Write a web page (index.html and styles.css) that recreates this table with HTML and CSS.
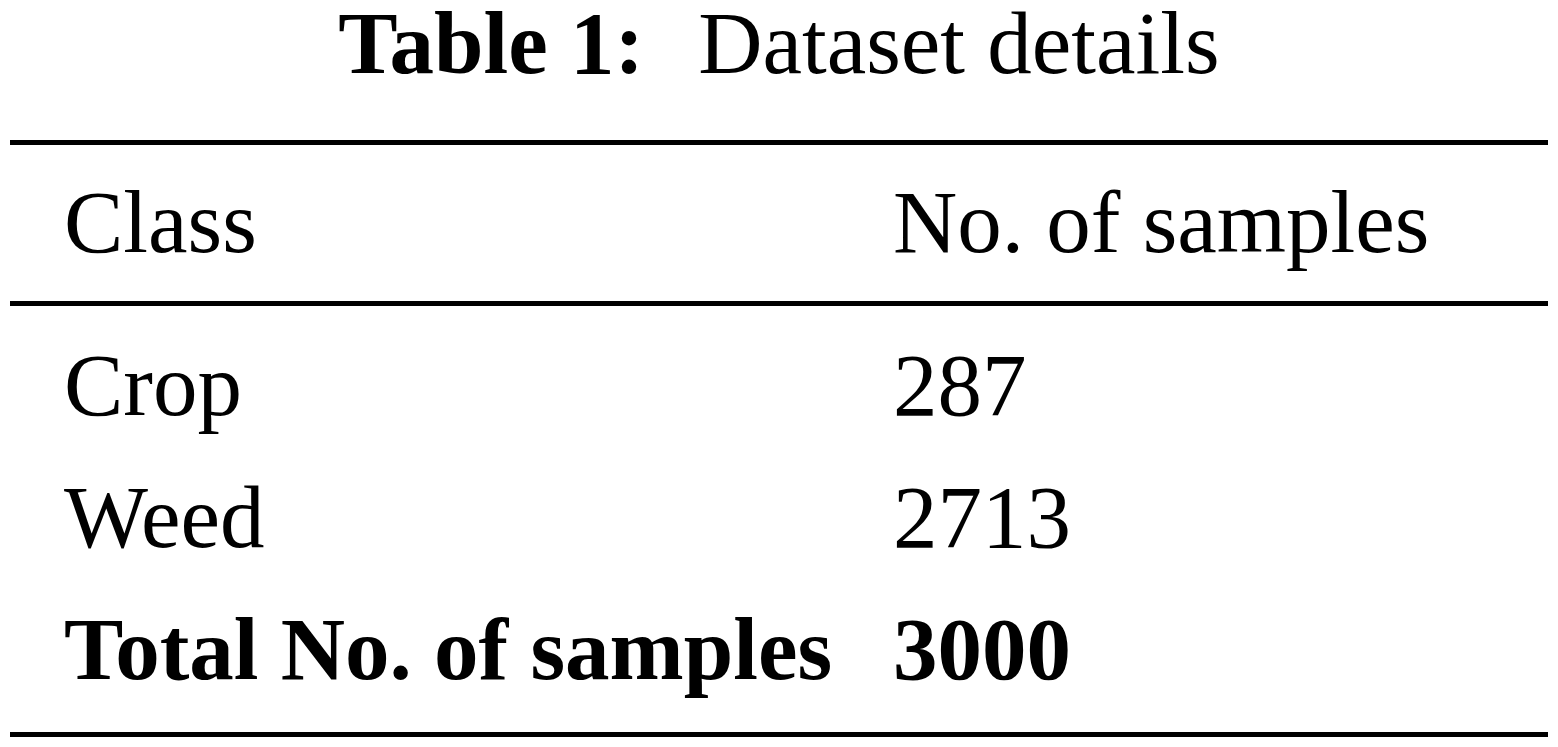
FILE: index.html
```html
<!DOCTYPE html>
<html lang="en">
<head>
    <meta charset="UTF-8">
    <title>Table 1: Dataset details</title>
    <link rel="stylesheet" href="styles.css">
</head>
<body>
    <div class="page">
        <div class="caption"><b>Table 1:</b><span class="caption-text">Dataset details</span></div>

        <table class="data">
            <colgroup>
                <col class="col-class">
                <col class="col-count">
            </colgroup>
            <thead>
                <tr>
                    <th>Class</th>
                    <th>No. of samples</th>
                </tr>
            </thead>
            <tbody>
                <tr class="first-row">
                    <td>Crop</td>
                    <td>287</td>
                </tr>
                <tr>
                    <td>Weed</td>
                    <td>2713</td>
                </tr>
                <tr class="total last-row">
                    <td>Total No. of samples</td>
                    <td>3000</td>
                </tr>
            </tbody>
        </table>
    </div>
</body>
</html>
```

FILE: styles.css
```css
body {
    margin: 0;
    background: #fff;
    color: #000;
    font-family: "Liberation Serif", "Times New Roman", serif;
    font-size: 89px;
}
.page {
    margin: 0 10px;
}
.caption {
    text-align: center;
    line-height: 86px;
    margin-bottom: 54px;
}
.caption b {
    font-weight: bold;
}
.caption-text {
    margin-left: 54px;
}
.data {
    width: 100%;
    border-collapse: collapse;
    table-layout: fixed;
    border-top: 5px solid #000;
    border-bottom: 5px solid #000;
}
.col-class {
    width: 829px;
}
th, td {
    font-weight: normal;
    text-align: left;
    line-height: 132px;
    height: 132px;
    padding: 0 0 0 54px;
    white-space: nowrap;
}
.data th {
    padding-top: 11px;
    padding-bottom: 13px;
}
.data thead tr {
    border-bottom: 5px solid #000;
}
.first-row td {
    padding-top: 13px;
}
.last-row td {
    padding-bottom: 17px;
}
.total td {
    font-weight: bold;
}
```
